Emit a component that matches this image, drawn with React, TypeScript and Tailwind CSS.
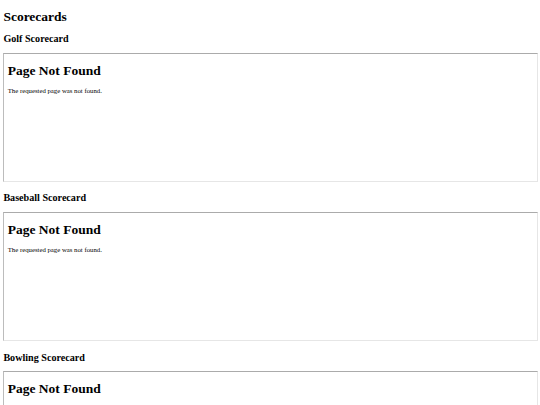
const cards = ["Golf Scorecard", "Baseball Scorecard", "Bowling Scorecard"]

function NotFoundFrame() {
  return (
    <div className="w-[535px] h-[129px] mb-[10.7px] overflow-hidden bg-white border border-t-[#ababab] border-l-[#bcbcbc] border-r-[#e6e6e6] border-b-[#e6e6e6]">
      <div className="pt-[9.05px] px-[3.375px]">
        <h1 className="text-[13.5px] leading-[15px] font-bold mb-[9.05px]">Page Not Found</h1>
        <p className="text-[6.75px] leading-[7.8px]">The requested page was not found.</p>
      </div>
    </div>
  )
}

export default function App() {
  return (
    <div className="w-[540px] h-[405px] overflow-hidden bg-white text-black font-['Liberation_Serif',serif]">
      <div className="pt-[9.05px] px-[3.375px]">
        <h1 className="text-[13.5px] leading-[15px] font-bold mb-[9.05px]">Scorecards</h1>
        {cards.map((title) => (
          <section key={title}>
            <h2 className="text-[10.125px] leading-[11.23px] font-bold mb-[8.4px]">{title}</h2>
            <NotFoundFrame />
          </section>
        ))}
      </div>
    </div>
  )
}
